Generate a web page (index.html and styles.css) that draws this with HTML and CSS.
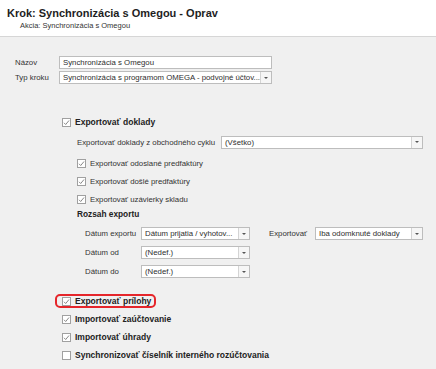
FILE: index.html
```html
<!DOCTYPE html>
<html>
<head>
<meta charset="utf-8">
<link rel="stylesheet" href="styles.css">
</head>
<body>
<div class="header">
  <div class="title">Krok: Synchronizácia s Omegou - Oprav</div>
  <div class="subtitle">Akcia: Synchronizácia s Omegou</div>
</div>
<div class="form">
  <div class="frow">
    <span class="flabel">Názov</span>
    <div class="combo w213"><span class="val">Synchronizácia s Omegou</span></div>
  </div>
  <div class="frow">
    <span class="flabel">Typ kroku</span>
    <div class="combo w213"><span class="val">Synchronizácia s programom OMEGA - podvojné účtov...</span><span class="btn"><i class="tri"></i></span></div>
  </div>

  <div class="opts">
    <div class="row">
      <span class="cb on"><svg viewBox="0 0 7 7" width="7" height="7"><path d="M1 3.8 L2.7 5.5 L6 1.5" fill="none" stroke="#7a7a7a" stroke-width="0.9"/></svg></span>
      <span class="blabel">Exportovať doklady</span>
    </div>
    <div class="sub">
      <div class="row r2">
        <span class="lab w144">Exportovať doklady z obchodného cyklu</span>
        <div class="combo w202"><span class="val">(Všetko)</span><span class="btn"><i class="tri"></i></span></div>
      </div>
      <div class="row r3">
        <span class="cb on"><svg viewBox="0 0 7 7" width="7" height="7"><path d="M1 3.8 L2.7 5.5 L6 1.5" fill="none" stroke="#7a7a7a" stroke-width="0.9"/></svg></span>
        <span class="lab">Exportovať odoslané predfaktúry</span>
      </div>
      <div class="row">
        <span class="cb on"><svg viewBox="0 0 7 7" width="7" height="7"><path d="M1 3.8 L2.7 5.5 L6 1.5" fill="none" stroke="#7a7a7a" stroke-width="0.9"/></svg></span>
        <span class="lab">Exportovať došlé predfaktúry</span>
      </div>
      <div class="row">
        <span class="cb on"><svg viewBox="0 0 7 7" width="7" height="7"><path d="M1 3.8 L2.7 5.5 L6 1.5" fill="none" stroke="#7a7a7a" stroke-width="0.9"/></svg></span>
        <span class="lab">Exportovať uzávierky skladu</span>
      </div>
      <div class="heading">Rozsah exportu</div>
      <div class="dates">
        <div class="drow">
          <span class="lab w56">Dátum exportu</span>
          <div class="combo w109"><span class="val">Dátum prijatia / vyhotov...</span><span class="btn"><i class="tri"></i></span></div>
          <span class="lab w46 exl">Exportovať</span>
          <div class="combo w108"><span class="val">Iba odomknuté doklady</span><span class="btn"><i class="tri"></i></span></div>
        </div>
        <div class="drow">
          <span class="lab w56">Dátum od</span>
          <div class="combo w109"><span class="val">(Nedef.)</span><span class="btn"><i class="tri"></i></span></div>
        </div>
        <div class="drow">
          <span class="lab w56">Dátum do</span>
          <div class="combo w109"><span class="val">(Nedef.)</span><span class="btn"><i class="tri"></i></span></div>
        </div>
      </div>
    </div>

    <div class="row r10">
      <span class="hl">
        <span class="cb on"><svg viewBox="0 0 7 7" width="7" height="7"><path d="M1 3.8 L2.7 5.5 L6 1.5" fill="none" stroke="#7a7a7a" stroke-width="0.9"/></svg></span>
        <span class="blabel">Exportovať prílohy</span>
      </span>
    </div>
    <div class="row">
      <span class="cb on"><svg viewBox="0 0 7 7" width="7" height="7"><path d="M1 3.8 L2.7 5.5 L6 1.5" fill="none" stroke="#7a7a7a" stroke-width="0.9"/></svg></span>
      <span class="blabel">Importovať zaúčtovanie</span>
    </div>
    <div class="row">
      <span class="cb on"><svg viewBox="0 0 7 7" width="7" height="7"><path d="M1 3.8 L2.7 5.5 L6 1.5" fill="none" stroke="#7a7a7a" stroke-width="0.9"/></svg></span>
      <span class="blabel">Importovať úhrady</span>
    </div>
    <div class="row">
      <span class="cb"></span>
      <span class="blabel">Synchronizovať číselník interného rozúčtovania</span>
    </div>
  </div>
</div>
</body>
</html>
```

FILE: styles.css
```css
html, body {
  margin: 0;
  padding: 0;
}
body {
  background: #f0f0f0;
  font-family: "Liberation Sans", Arial, sans-serif;
  font-size: 7.8px;
  color: #333;
  height: 369px;
  overflow: hidden;
}
.header {
  background: #fff;
  height: 37px;
  border-bottom: 1px solid #d6d6d6;
  padding-left: 7px;
  box-sizing: border-box;
}
.title {
  font-weight: bold;
  font-size: 11px;
  line-height: 14px;
  padding-top: 6px;
  color: #1e1e1e;
}
.subtitle {
  margin-left: 13px;
  font-size: 7.5px;
  line-height: 10px;
  margin-top: 1px;
  color: #333;
}
.form {
  padding: 19px 0 0 15px;
}
.frow {
  display: flex;
  align-items: center;
  height: 13px;
  margin-bottom: 2px;
}
.flabel {
  width: 44px;
}
.combo {
  display: flex;
  height: 13px;
  box-sizing: border-box;
  border: 1px solid #bdbdbd;
  background: #fff;
  color: #2e2e2e;
}
.val {
  flex: 1;
  padding-left: 3px;
  line-height: 11px;
  white-space: nowrap;
  overflow: hidden;
}
.btn {
  width: 10px;
  border-left: 1px solid #d4d4d4;
  background: #f6f6f6;
  display: flex;
  align-items: center;
  justify-content: center;
}
.tri {
  width: 0;
  height: 0;
  border-left: 2px solid transparent;
  border-right: 2px solid transparent;
  border-top: 2px solid #555;
}
.w213 { width: 213px; }
.w202 { width: 202px; }
.w109 { width: 109px; }
.w108 { width: 108px; }
.w144 { width: 144px; }
.w56 { width: 56px; }
.w46 { width: 46px; }

.opts {
  margin-left: 47px;
  margin-top: 29px;
}
.row {
  display: flex;
  align-items: center;
  height: 18px;
}
.cb {
  width: 9px;
  height: 9px;
  box-sizing: border-box;
  border: 1px solid #a0a0a0;
  background: #fff;
  display: flex;
  align-items: center;
  justify-content: center;
  margin-right: 4px;
  flex: none;
}
.blabel {
  font-weight: bold;
  font-size: 8.5px;
  color: #222;
  white-space: nowrap;
}
.lab {
  white-space: nowrap;
  flex: none;
}
.sub {
  padding-left: 15px;
}
.r2 { margin-top: 2px; }
.r3 { margin-top: 3px; }
.heading {
  font-weight: bold;
  font-size: 8.3px;
  color: #222;
  height: 12px;
  line-height: 12px;
}
.dates {
  padding-left: 8px;
  margin-top: 4px;
}
.drow {
  display: flex;
  align-items: center;
  height: 19px;
}
.exl {
  margin-left: 19px;
}
.r10 { margin-top: 11px; }
.hl {
  display: flex;
  align-items: center;
  height: 14px;
  box-sizing: border-box;
  border: 2px solid #e5262b;
  border-radius: 5px;
  padding: 0 3px 0 5px;
  margin-left: -7px;
}
```
